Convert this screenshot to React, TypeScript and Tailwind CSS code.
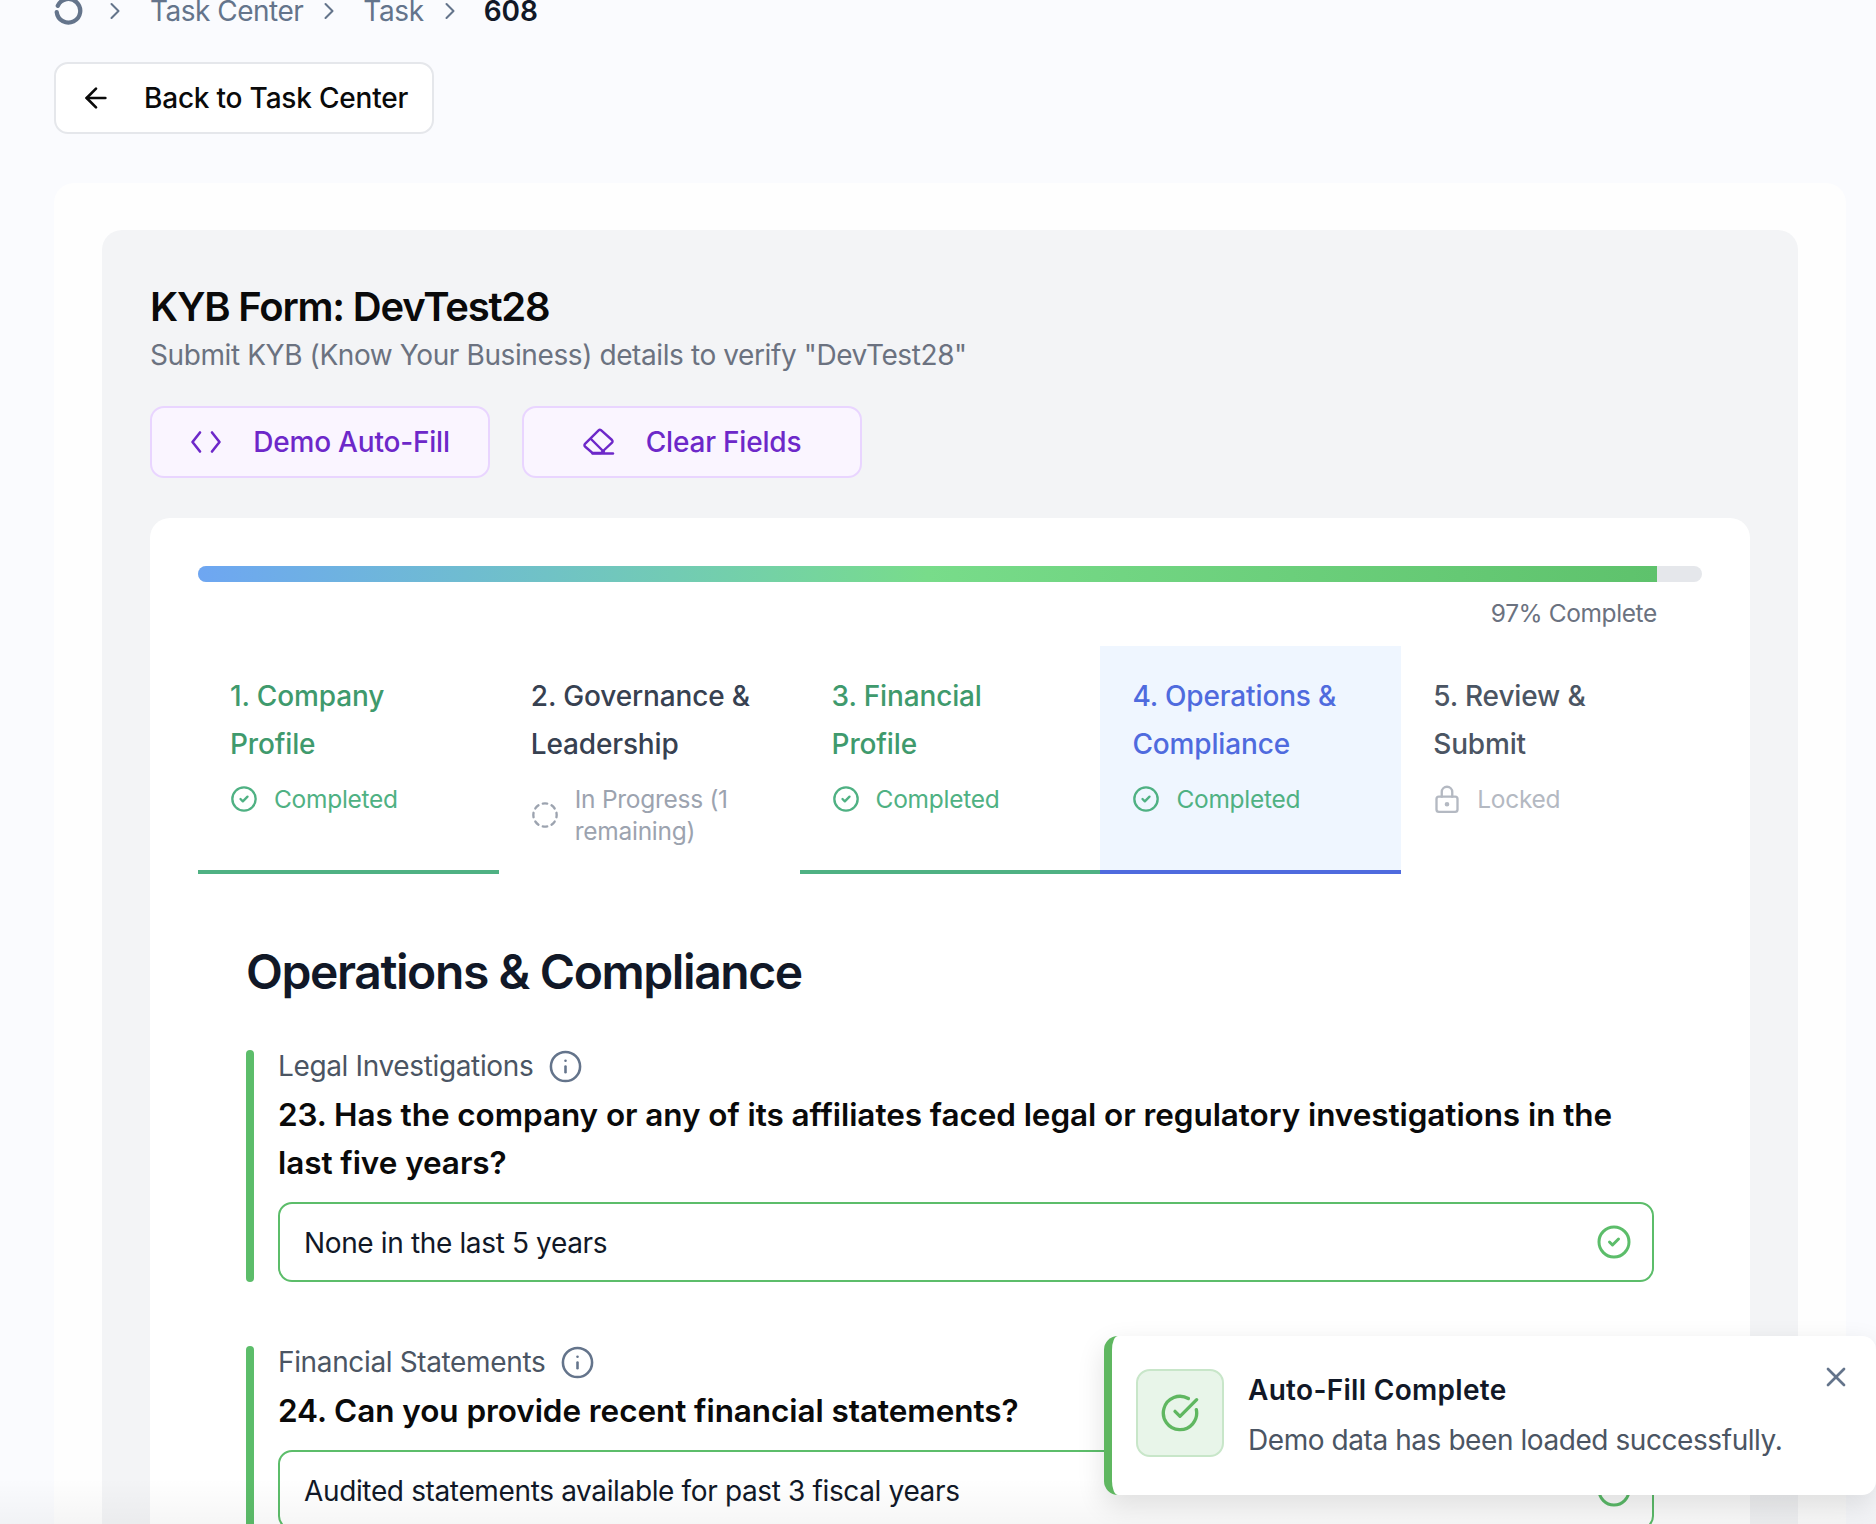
import { ArrowLeft, ChevronRight, Info, X } from "lucide-react";

const font = { fontFamily: "Inter, 'Liberation Sans', sans-serif" };

function CircleTick({ className }: { className: string }) {
  return (
    <svg viewBox="0 0 24 24" fill="none" stroke="currentColor" strokeWidth="2" strokeLinecap="round" strokeLinejoin="round" className={className}>
      <circle cx="12" cy="12" r="10" />
      <path d="m9 12 2 2 4-4" />
    </svg>
  );
}

function DashedCircle({ className }: { className: string }) {
  return (
    <svg viewBox="0 0 24 24" fill="none" stroke="currentColor" strokeWidth="2" strokeLinecap="round" className={className}>
      <path d="M10.1 2.18a10 10 0 0 1 3.8 0" />
      <path d="M17.6 3.71a10 10 0 0 1 2.69 2.7" />
      <path d="M21.82 10.1a10 10 0 0 1 0 3.8" />
      <path d="M20.29 17.6a10 10 0 0 1-2.7 2.69" />
      <path d="M13.9 21.82a10 10 0 0 1-3.8 0" />
      <path d="M6.4 20.29a10 10 0 0 1-2.69-2.7" />
      <path d="M2.18 13.9a10 10 0 0 1 0-3.8" />
      <path d="M3.71 6.4a10 10 0 0 1 2.7-2.69" />
    </svg>
  );
}

function LockDot({ className }: { className: string }) {
  return (
    <svg viewBox="0 0 24 24" fill="none" stroke="currentColor" strokeWidth="2" strokeLinecap="round" strokeLinejoin="round" className={className}>
      <rect x="3" y="10" width="18" height="13" rx="2" />
      <path d="M7.5 10V6a4.5 4.5 0 0 1 9 0v4" />
      <circle cx="12" cy="16.5" r="1" fill="currentColor" />
    </svg>
  );
}

const tabs = [
  { title: "1. Company Profile", status: "Completed", kind: "done" },
  { title: "2. Governance & Leadership", status: "In Progress (1 remaining)", kind: "progress" },
  { title: "3. Financial Profile", status: "Completed", kind: "done" },
  { title: "4. Operations & Compliance", status: "Completed", kind: "active" },
  { title: "5. Review & Submit", status: "Locked", kind: "locked" },
];

function Tab({ title, status, kind }: { title: string; status: string; kind: string }) {
  const wrap =
    kind === "done"
      ? "border-[#4fb183]"
      : kind === "active"
        ? "border-[#4f6bde] bg-[#eff6ff]"
        : "border-transparent";
  const titleColor =
    kind === "done"
      ? "text-[#3f9a6d]"
      : kind === "active"
        ? "text-[#4f6bde]"
        : kind === "progress"
          ? "text-[#374151]"
          : "text-[#4b5563]";
  const statusColor =
    kind === "done" || kind === "active"
      ? "text-[#4fb183]"
      : kind === "progress"
        ? "text-[#9ca3af]"
        : "text-[#b4b9c2]";
  return (
    <div className={`h-[228px] border-b-4 px-8 pt-[26px] ${wrap}`}>
      <div className={`text-[28px] leading-[48px] font-medium tracking-[-0.15px] ${titleColor}`}>{title}</div>
      <div className={`mt-[15px] flex items-center gap-4 text-[24.5px] leading-[32px] tracking-[-0.28px] ${statusColor}`}>
        {kind === "locked" ? (
          <LockDot className="size-7 shrink-0" />
        ) : kind === "progress" ? (
          <DashedCircle className="size-7 shrink-0" />
        ) : (
          <CircleTick className="size-7 shrink-0" />
        )}
        <span>{status}</span>
      </div>
    </div>
  );
}

function Question({
  label,
  question,
  answer,
}: {
  label: string;
  question: string;
  answer: string;
}) {
  return (
    <div className="flex gap-6">
      <div className="w-2 shrink-0 rounded-full bg-[#5cbd6a]" />
      <div className="flex-1">
        <div className="flex h-8 items-center gap-[15px] text-[28px] tracking-[-0.36px] text-[#4b5563]">
          {label}
          <Info className="size-[35px] text-[#64748b]" strokeWidth={1.75} />
        </div>
        <div className="mt-[9px] text-[31.5px] leading-[48px] font-semibold tracking-[-0.07px] text-[#0a0a0a]">{question}</div>
        <div className="mt-[15px] flex h-20 items-center justify-between rounded-[14px] border-2 border-[#5cbd6a] bg-white pr-[20px] pl-6 text-[28px] tracking-[-0.36px] text-[#111827]">
          <span className="mt-[2px]">{answer}</span>
          <CircleTick className="size-9 text-[#5cbd6a]" />
        </div>
      </div>
    </div>
  );
}

export default function App() {
  return (
    <div className="relative h-[1524px] overflow-hidden bg-[#fafbfe] text-[#111827]" style={font}>
      <div className="-mt-[13px] pr-[30px] pl-[54px]">
        {/* Breadcrumb */}
        <div className="flex h-12 items-center text-[28px]">
          <svg viewBox="0 0 28 28" fill="none" stroke="#64748b" strokeWidth="4" className="-mt-[2px] -ml-[1px] size-[30px]">
            <path d="M4.5 10a11 11 0 1 1-1 6" strokeLinecap="round" />
          </svg>
          <ChevronRight className="ml-[18px] size-7 text-[#64748b]" strokeWidth={1.75} />
          <span className="ml-[21px] tracking-[-0.5px] text-[#64748b]">Task Center</span>
          <ChevronRight className="ml-[12px] size-7 text-[#64748b]" strokeWidth={1.75} />
          <span className="ml-[20px] tracking-[-0.4px] text-[#64748b]">Task</span>
          <ChevronRight className="ml-[12px] size-7 text-[#64748b]" strokeWidth={1.75} />
          <span className="ml-[20px] font-semibold text-[#111827]">608</span>
        </div>

        <button className="mt-[27px] flex h-[72px] w-[380px] items-center gap-[32px] rounded-[14px] border-2 border-[#e5e7eb] bg-white pl-[24px] text-[28px] font-medium tracking-[-0.2px] text-[#0a0a0a]">
          <ArrowLeft className="size-8" strokeWidth={2} />
          Back to Task Center
        </button>

        {/* Outer card */}
        <div className="mt-[49px] rounded-[20px] bg-[#fefefe] px-12 pt-[47px]">
          <div className="rounded-[20px] bg-[#f3f4f6] px-12 pt-[49px]">
            <h1 className="text-[40px] leading-[56px] font-semibold tracking-[-1.2px] text-[#0a0a0a]">KYB Form: DevTest28</h1>
            <p className="text-[28px] leading-[40px] tracking-[-0.4px] text-[#6b7280]">
              Submit KYB (Know Your Business) details to verify "DevTest28"
            </p>
            <div className="mt-[31px] flex gap-8">
              <button className="flex h-[72px] w-[340px] items-center justify-center gap-[31px] rounded-[14px] border-2 border-[#e9d5ff] bg-[#faf5ff] text-[28px] font-medium tracking-[-0.2px] text-[#6d28c9]">
                <svg viewBox="0 0 32 24" fill="none" stroke="currentColor" strokeWidth="2.6" strokeLinecap="round" strokeLinejoin="round" className="h-6 w-8">
                  <path d="m10 2.5-7.5 9.5 7.5 9.5" />
                  <path d="m22 2.5 7.5 9.5-7.5 9.5" />
                </svg>
                Demo Auto-Fill
              </button>
              <button className="flex h-[72px] w-[340px] items-center justify-center gap-[31px] rounded-[14px] border-2 border-[#e9d5ff] bg-[#faf5ff] text-[28px] font-medium tracking-[-0.2px] text-[#6d28c9]">
                <svg viewBox="0 0 32 28" fill="none" stroke="currentColor" strokeWidth="2.4" strokeLinecap="round" strokeLinejoin="round" className="h-7 w-8">
                  <path d="M18 2.2 29 12a1.8 1.8 0 0 1 0 2.6L18 25H9.5L2 18.5a1.8 1.8 0 0 1 0-2.6L15.6 2.3a1.8 1.8 0 0 1 2.4-.1Z" />
                  <path d="m8 11 13 13" />
                  <path d="M9.5 25.5H30" />
                </svg>
                Clear Fields
              </button>
            </div>

            {/* Form card */}
            <div className="mt-[40px] rounded-t-[20px] bg-white px-12 pt-[48px] pb-[200px]">
              <div className="h-4 w-full overflow-hidden rounded-full bg-[#e5e7eb]">
                <div className="h-full w-[97%] bg-gradient-to-r from-[#6ea6f2] via-[#78dc8a] to-[#5ec26c]" />
              </div>
              <div className="mt-[15px] w-[97%] text-right text-[24.5px] leading-[32px] tracking-[-0.4px] text-[#6b7280]">97% Complete</div>

              <div className="mt-[17px] grid grid-cols-5">
                {tabs.map((t) => (
                  <Tab key={t.title} {...t} />
                ))}
              </div>

              <div className="px-12 pt-[70px]">
                <h2 className="text-[48px] leading-[56px] font-semibold tracking-[-1.4px] text-[#111827]">Operations &amp; Compliance</h2>
                <div className="mt-[50px]">
                  <Question
                    label="Legal Investigations"
                    question="23. Has the company or any of its affiliates faced legal or regulatory investigations in the last five years?"
                    answer="None in the last 5 years"
                  />
                </div>
                <div className="mt-[64px]">
                  <Question
                    label="Financial Statements"
                    question="24. Can you provide recent financial statements?"
                    answer="Audited statements available for past 3 fiscal years"
                  />
                </div>
              </div>
            </div>
          </div>
        </div>
      </div>

      {/* Bottom fade */}
      <div className="pointer-events-none absolute inset-x-0 bottom-0 h-[46px] bg-gradient-to-b from-transparent to-black/[0.035]" />

      {/* Toast */}
      <div className="absolute top-[1336px] right-0 flex h-[159px] w-[772px] gap-[24px] rounded-[14px] border-l-8 border-[#5fb760] bg-white pt-[33px] pl-6 shadow-[0_10px_28px_rgba(0,0,0,0.12)]">
        <div className="flex size-[88px] shrink-0 items-center justify-center rounded-[14px] border-2 border-[#c8e6c9] bg-[#e8f5e9]">
          <svg viewBox="0 0 24 24" fill="none" stroke="#5fb760" strokeWidth="2" strokeLinecap="round" strokeLinejoin="round" className="size-10">
            <path d="M21.8 10A10 10 0 1 1 17 3.34" />
            <path d="m9 11 3 3L22 4" />
          </svg>
        </div>
        <div>
          <div className="pt-[1px] text-[28px] leading-[40px] font-semibold tracking-[0.3px] text-[#111827]">Auto-Fill Complete</div>
          <div className="mt-[10px] text-[28px] leading-[40px] tracking-[-0.43px] text-[#4b5563]">Demo data has been loaded successfully.</div>
        </div>
        <X className="absolute top-[25px] right-[24px] size-8 text-[#64748b]" strokeWidth={2} />
      </div>
    </div>
  );
}
